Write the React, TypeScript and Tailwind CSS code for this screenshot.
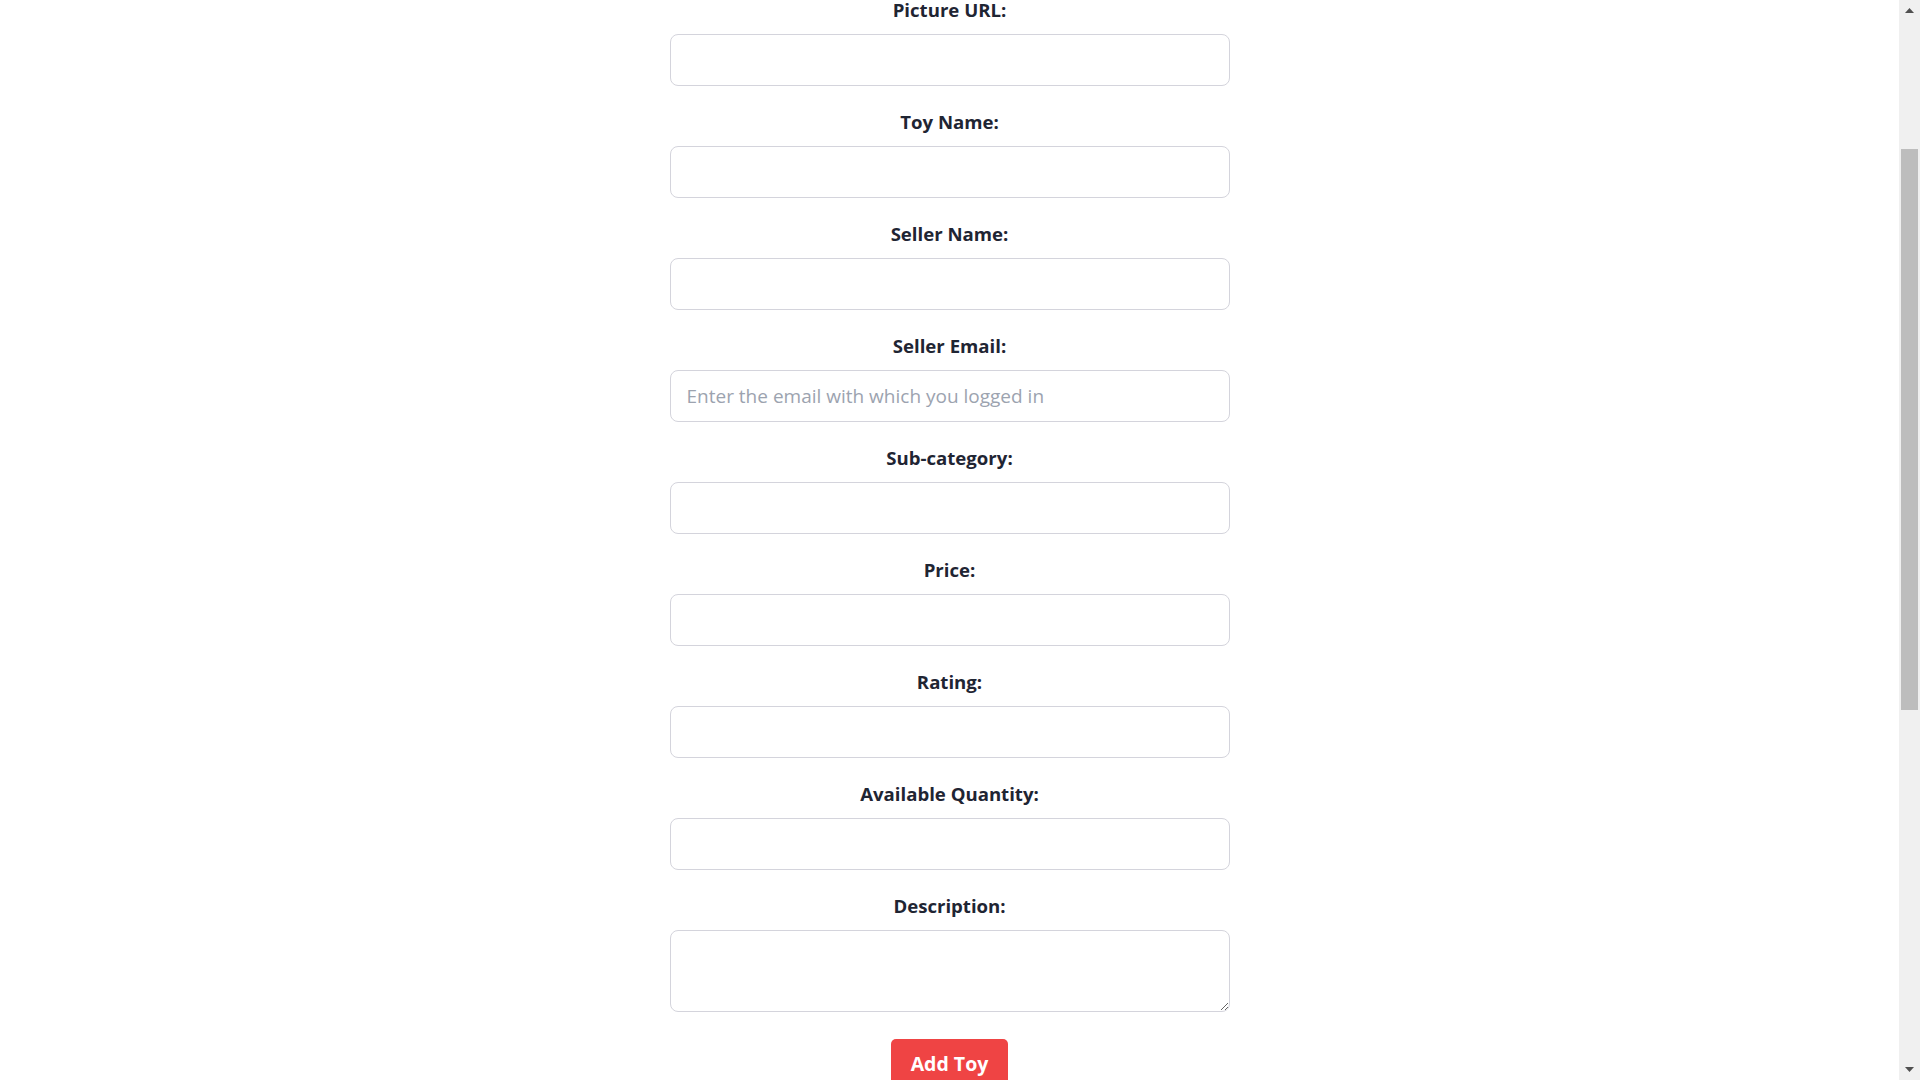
import React from "react";

const fields = [
  { label: "Picture URL:", placeholder: "" },
  { label: "Toy Name:", placeholder: "" },
  { label: "Seller Name:", placeholder: "" },
  { label: "Seller Email:", placeholder: "Enter the email with which you logged in" },
  { label: "Sub-category:", placeholder: "" },
  { label: "Price:", placeholder: "" },
  { label: "Rating:", placeholder: "" },
  { label: "Available Quantity:", placeholder: "" },
];

function Scrollbar() {
  return (
    <div className="flex h-[1080px] w-[21px] shrink-0 flex-col bg-[#f0f0f0]">
      <div className="flex h-[21px] items-center justify-center">
        <svg width="9" height="5" viewBox="0 0 9 5">
          <polygon points="4.5,0 9,5 0,5" fill="#505050" />
        </svg>
      </div>
      <div className="h-[128px]" />
      <div className="mx-[2px] h-[561px] bg-[#bdbdbd]" />
      <div className="flex-1" />
      <div className="flex h-[21px] items-center justify-center">
        <svg width="9" height="5" viewBox="0 0 9 5">
          <polygon points="0,0 9,0 4.5,5" fill="#505050" />
        </svg>
      </div>
    </div>
  );
}

export default function App() {
  return (
    <div
      className="flex h-[1080px] w-full overflow-hidden bg-white"
      style={{ fontFamily: '"Open Sans", "Noto Sans", sans-serif' }}
    >
      <div className="flex h-[1080px] flex-1 flex-col items-center overflow-hidden">
        <form className="flex w-[560px] flex-col items-center">
          {fields.map((f) => (
            <div key={f.label} className="mb-[26px] flex w-full flex-col items-center">
              <label className="mb-[14px] h-[20px] text-[18.6px] font-bold leading-[20px] text-[#1f2533]">
                {f.label}
              </label>
              <input
                type="text"
                placeholder={f.placeholder}
                className="h-[52px] w-full rounded-lg border border-[#d4d4dc] bg-white px-[16px] text-[19px] text-gray-800 outline-none placeholder:text-[#9ca3af]"
              />
            </div>
          ))}
          <div className="flex w-full flex-col items-center">
            <label className="mb-[14px] h-[20px] text-[18.6px] font-bold leading-[20px] text-[#1f2533]">
              Description:
            </label>
            <textarea className="h-[82px] w-full rounded-lg border border-[#d4d4dc] bg-white px-[16px] py-[10px] text-[19px] outline-none" />
          </div>
          <button
            type="button"
            className="mt-[27px] h-[50px] w-[117px] rounded-[5px] bg-[#ef4444] text-[19.5px] font-bold text-white"
          >
            Add Toy
          </button>
        </form>
      </div>
      <Scrollbar />
    </div>
  );
}
